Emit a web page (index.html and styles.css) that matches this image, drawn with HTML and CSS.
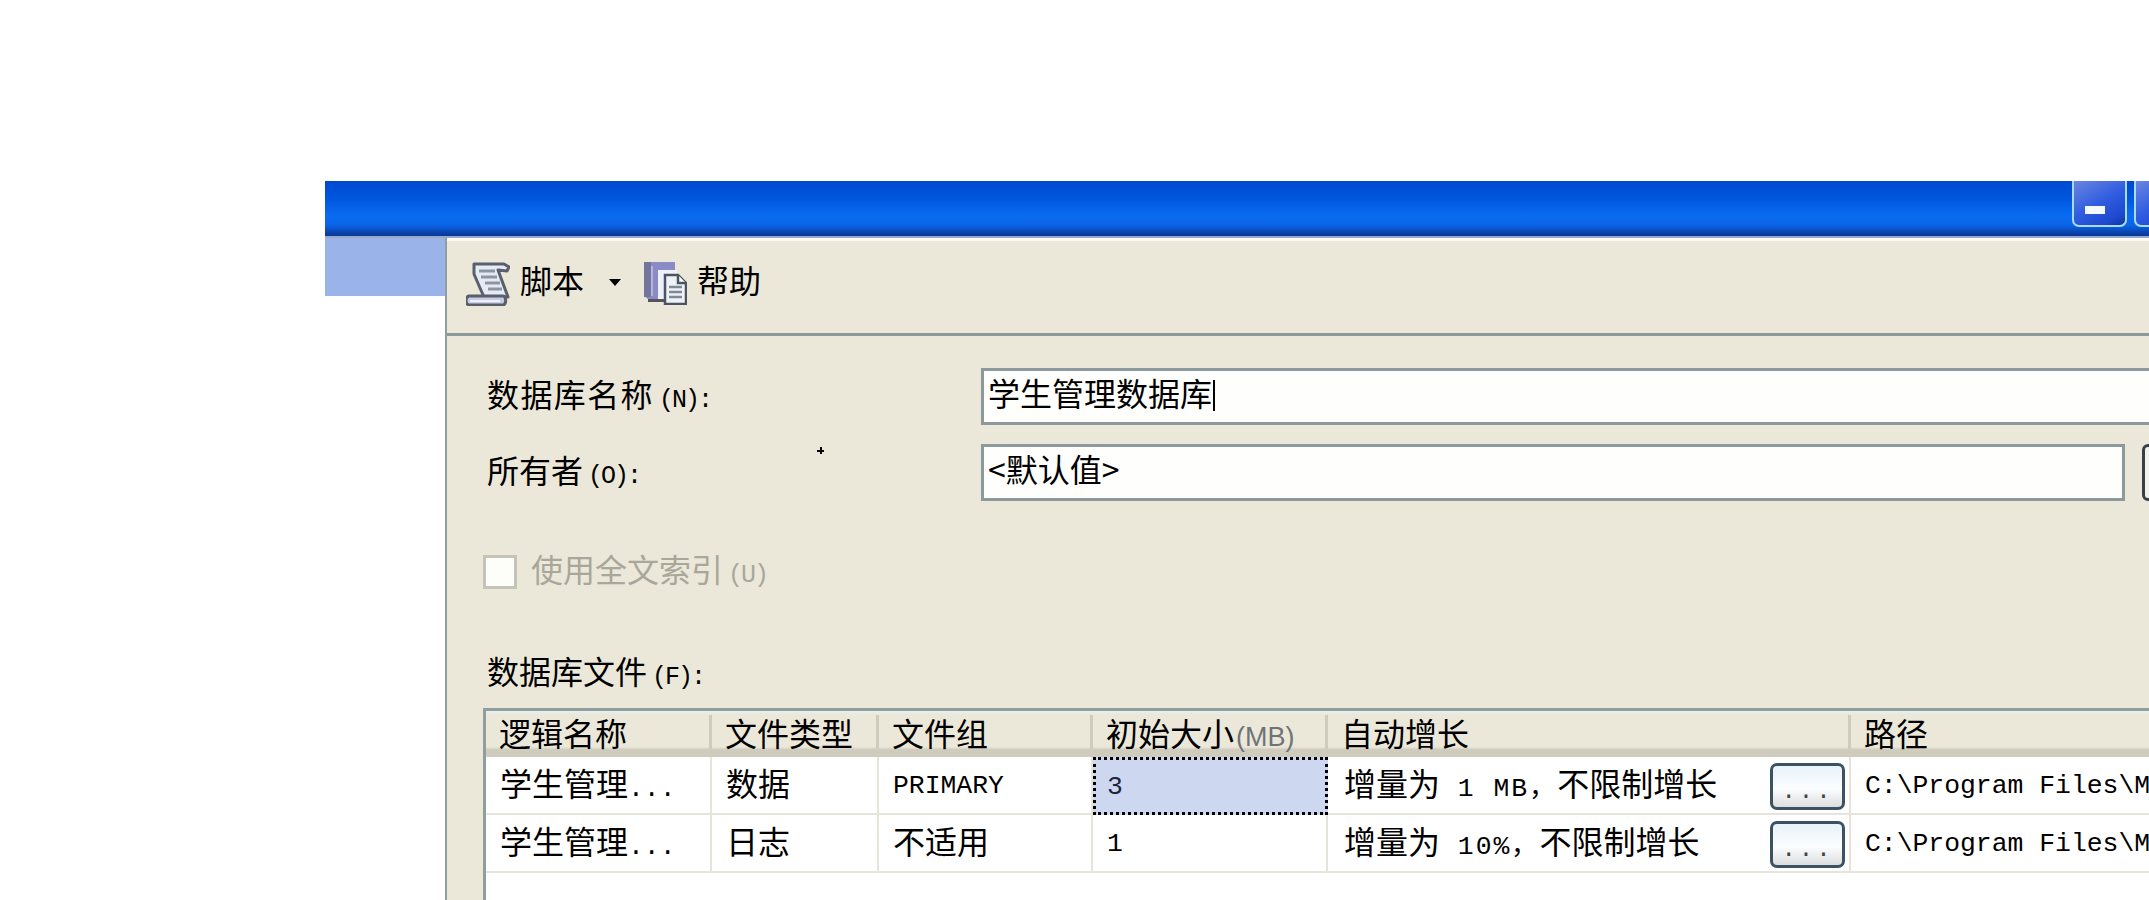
FILE: index.html
```html
<!DOCTYPE html>
<html lang="zh-CN">
<head>
<meta charset="utf-8">
<title>新建数据库</title>
<link rel="stylesheet" href="styles.css">
</head>
<body>
<div class="window">
  <div class="titlebar">
    <div class="winbtn"><span class="min-glyph"></span></div>
    <div class="winbtn"></div>
  </div>
  <div class="body">
    <div class="side"></div>
    <div class="dialog">
      <div class="toolbar">
        <svg class="ico-script" viewBox="6 8 44 46" aria-hidden="true">
          <path d="M14 12h30l5 3-2 4-9-1 10 27H24l-4-9-6-14z" fill="#e4ebf4" stroke="#59606c" stroke-width="3" stroke-linejoin="round"/>
          <path d="M19 19h16M21 25h16M25 31h15M28 37h14" stroke="#8b95a3" stroke-width="3" fill="none"/>
          <path d="M9 44h34c3 0 4 8 0 9H9c-4-1-4-8 0-9z" fill="#c5cce6" stroke="#59606c" stroke-width="3"/>
          <path d="M10 49h30" stroke="#eef1fa" stroke-width="2"/>
        </svg>
        <span class="tool-text">脚本</span>
        <span class="arrow"></span>
        <svg class="ico-help" viewBox="7 10 43 43" aria-hidden="true">
          <path d="M7 10h31v37H11l-4-3z" fill="#8a8ac4"/>
          <path d="M7 10h7v35H7z" fill="#74749f"/>
          <path d="M14 14h2v30h-2z" fill="#b6b6dc"/>
          <path d="M21 18h19v30H21z" fill="#eef2f8"/>
          <path d="M11 47h19v3H11z" fill="#55555f"/>
          <path d="M28 23h13l8 8v21H28z" fill="#eef1f5" stroke="#4b5561" stroke-width="2.5"/>
          <path d="M41 23v8h8" fill="#fff" stroke="#4b5561" stroke-width="2.5"/>
          <path d="M32 35h13M32 40h13M32 45h13" stroke="#7e8a98" stroke-width="2.5"/>
        </svg>
        <span class="tool-text">帮助</span>
      </div>
      <div class="form">
        <div class="field">
          <div class="label"><span class="wide">数据库名称</span><span class="latin">(N):</span></div>
          <div class="textbox">学生管理数据库<span class="caret"></span></div>
        </div>
        <div class="field owner">
          <div class="label">所有者<span class="latin">(O):</span></div>
          <div class="textbox short">&lt;默认值&gt;</div>
          <div class="browse-big"></div>
          <span class="cursor-mark"></span>
        </div>
        <div class="check-row">
          <span class="checkbox"></span>
          <span class="disabled-text">使用全文索引<span class="latin">(U)</span></span>
        </div>
        <div class="files-label">数据库文件<span class="latin">(F):</span></div>
        <div class="grid">
          <div class="row head">
            <div class="hcell">逻辑名称</div>
            <div class="hcell">文件类型</div>
            <div class="hcell">文件组</div>
            <div class="hcell">初始大小<span class="mb">(MB)</span></div>
            <div class="hcell">自动增长</div>
            <div class="hcell">路径</div>
          </div>
          <div class="row">
            <div class="cell">学生管理<span class="mono">...</span></div>
            <div class="cell">数据</div>
            <div class="cell mono">PRIMARY</div>
            <div class="cell mono selected">3</div>
            <div class="cell growth"><span>增量为<span class="mono spaced"> 1 MB，</span>不限制增长</span><span class="dots">...</span></div>
            <div class="cell mono">C:\Program Files\M</div>
          </div>
          <div class="row">
            <div class="cell">学生管理<span class="mono">...</span></div>
            <div class="cell">日志</div>
            <div class="cell">不适用</div>
            <div class="cell mono">1</div>
            <div class="cell growth"><span>增量为<span class="mono spaced"> 10%，</span>不限制增长</span><span class="dots">...</span></div>
            <div class="cell mono">C:\Program Files\M</div>
          </div>
        </div>
      </div>
    </div>
  </div>
</div>
</body>
</html>
```
FILE: styles.css
```css
* { box-sizing: border-box; }
html, body { margin: 0; height: 900px; overflow: hidden; background: #fff; }
body {
  padding: 181px 0 0 325px;
  font-family: "Noto Sans CJK SC", "Liberation Sans", sans-serif;
  font-size: 32px;
  color: #000;
}
.window { width: 1824px; height: 719px; overflow: hidden; display: flex; flex-direction: column; }
.titlebar {
  height: 57px;
  flex: none;
  display: flex;
  justify-content: flex-end;
  align-items: flex-start;
  gap: 7px;
  margin-right: -40px;
  background: linear-gradient(#0049cf 0, #0056de 30%, #0a6cf2 62%, #0a63e6 78%, #0a3fa5 92%, #0a3a9a 96%, #97a8cb 96.5%, #97a8cb 100%);
}
.winbtn {
  width: 55px;
  height: 46px;
  flex: none;
  border: 2px solid #a8dcf2;
  border-top: 0;
  border-radius: 0 0 7px 7px;
  background: linear-gradient(150deg, #6a86e0, #2f5ce0 50%, #1d49d0 82%, #12359a);
  display: flex;
  align-items: flex-end;
  justify-content: center;
  padding: 0 10px 11px 0;
}
.min-glyph { width: 20px; height: 8px; background: #f4f8ff; }
.body { flex: 1; display: flex; min-height: 0; }
.side { width: 120px; height: 58px; flex: none; background: #9ab3e8; }
.dialog {
  flex: none;
  width: 1800px;
  border-left: 2px solid #8f9f9f;
  background: #ebe8da;
  display: flex;
  flex-direction: column;
}
.toolbar {
  height: 98px;
  flex: none;
  border-top: 3px solid #fbfbf6;
  border-bottom: 3px solid #8f9a98;
  display: flex;
  align-items: center;
  padding: 0 0 10px 19px;
}
.ico-script { width: 44px; height: 46px; flex: none; margin-top: 2px; }
.ico-help { width: 43px; height: 43px; flex: none; margin: 2px 10px 0 23px; }
.tool-text { line-height: 40px; margin-left: 10px; margin-bottom: 6px; }
.ico-help + .tool-text { margin-left: 0; }
.arrow {
  width: 0;
  height: 0;
  border: 6.5px solid transparent;
  border-top: 7px solid #000;
  border-bottom: 0;
  margin-left: 25px;
}
.form { padding: 32px 0 0 40px; }
.field { display: flex; align-items: center; position: relative; }
.field.owner { margin-top: 19px; }
.label { width: 494px; flex: none; line-height: 40px; }
.wide { letter-spacing: 1.4px; }
.latin {
  font-family: "Liberation Mono", monospace;
  font-size: 25px;
  letter-spacing: -2px;
  margin-left: 5px;
}
.textbox {
  width: 1300px;
  height: 57px;
  flex: none;
  border: 3px solid #8c9a9e;
  background: #fefefd;
  padding: 0 0 0 4px;
  line-height: 42px;
}
.textbox.short { width: 1144px; }
.caret {
  display: inline-block;
  width: 2px;
  height: 31px;
  background: #000;
  vertical-align: -5px;
  margin-left: 1px;
}
.browse-big {
  width: 60px;
  height: 57px;
  flex: none;
  margin-left: 17px;
  border: 3px solid #35404a;
  border-radius: 6px;
  background: #f2f1ea;
}
.cursor-mark {
  position: absolute;
  left: 330px;
  top: 3px;
  width: 7px;
  height: 7px;
  background:
    linear-gradient(#000, #000) center / 7px 2px no-repeat,
    linear-gradient(#000, #000) center / 2px 7px no-repeat;
}
.check-row { display: flex; align-items: center; margin: 54px 0 0 -4px; height: 34px; }
.checkbox {
  width: 34px;
  height: 34px;
  flex: none;
  border: 3px solid #c6c4b6;
  background: #fdfdfa;
}
.disabled-text { margin-left: 14px; line-height: 40px; color: #a9a79a; }
.files-label { margin-top: 61px; line-height: 40px; height: 40px; margin-bottom: 18px; }
.grid {
  margin-left: -4px;
  width: 1700px;
  height: 300px;
  border-top: 3px solid #8f9f9f;
  border-left: 3px solid #8f9f9f;
  background: #fff;
}
.row {
  display: grid;
  grid-template-columns: 226px 167px 214px 235px 523px 1fr;
  height: 58px;
  line-height: 50px;
  white-space: nowrap;
}
.row.head {
  height: 46px;
  background: linear-gradient(#e9f0ee 0, #ebe8da 8%, #ebe8da 78%, #cfccbd 84%, #cfccbd 100%);
  padding-bottom: 5px;
}
.hcell {
  padding-left: 13px;
  height: 34px;
  margin-top: 4px;
  line-height: 34px;
}
.hcell:not(:last-child) { border-right: 3px solid #cfccbd; }
.mb { font-family: "Liberation Sans", sans-serif; font-size: 27px; color: #6f7478; margin-left: 2px; }
.cell {
  padding-left: 14px;
  border-right: 2px solid #e6e5dc;
  border-bottom: 2px solid #e6e5dc;
  overflow: hidden;
}
.mono { font-family: "Liberation Mono", monospace; font-size: 26.4px; }
.cell.mono { line-height: 58px; }
.spaced { letter-spacing: 2px; }
.cell.selected {
  background: #cdd8f0;
  color: #1b2440;
  border: 3px dotted #000;
  padding-left: 11px;
  line-height: 55px;
}
.growth { display: flex; justify-content: space-between; align-items: center; padding: 0 4px 0 16px; }
.dots {
  width: 75px;
  height: 47px;
  flex: none;
  margin-top: 3px;
  border: 3px solid #3c5262;
  border-radius: 7px;
  background: linear-gradient(#e8f3fb, #fbfdfe 55%, #dcdedf);
  font-family: "Liberation Mono", monospace;
  font-size: 24px;
  letter-spacing: 3px;
  line-height: 52px;
  text-align: center;
  color: #444;
  overflow: hidden;
}
```
